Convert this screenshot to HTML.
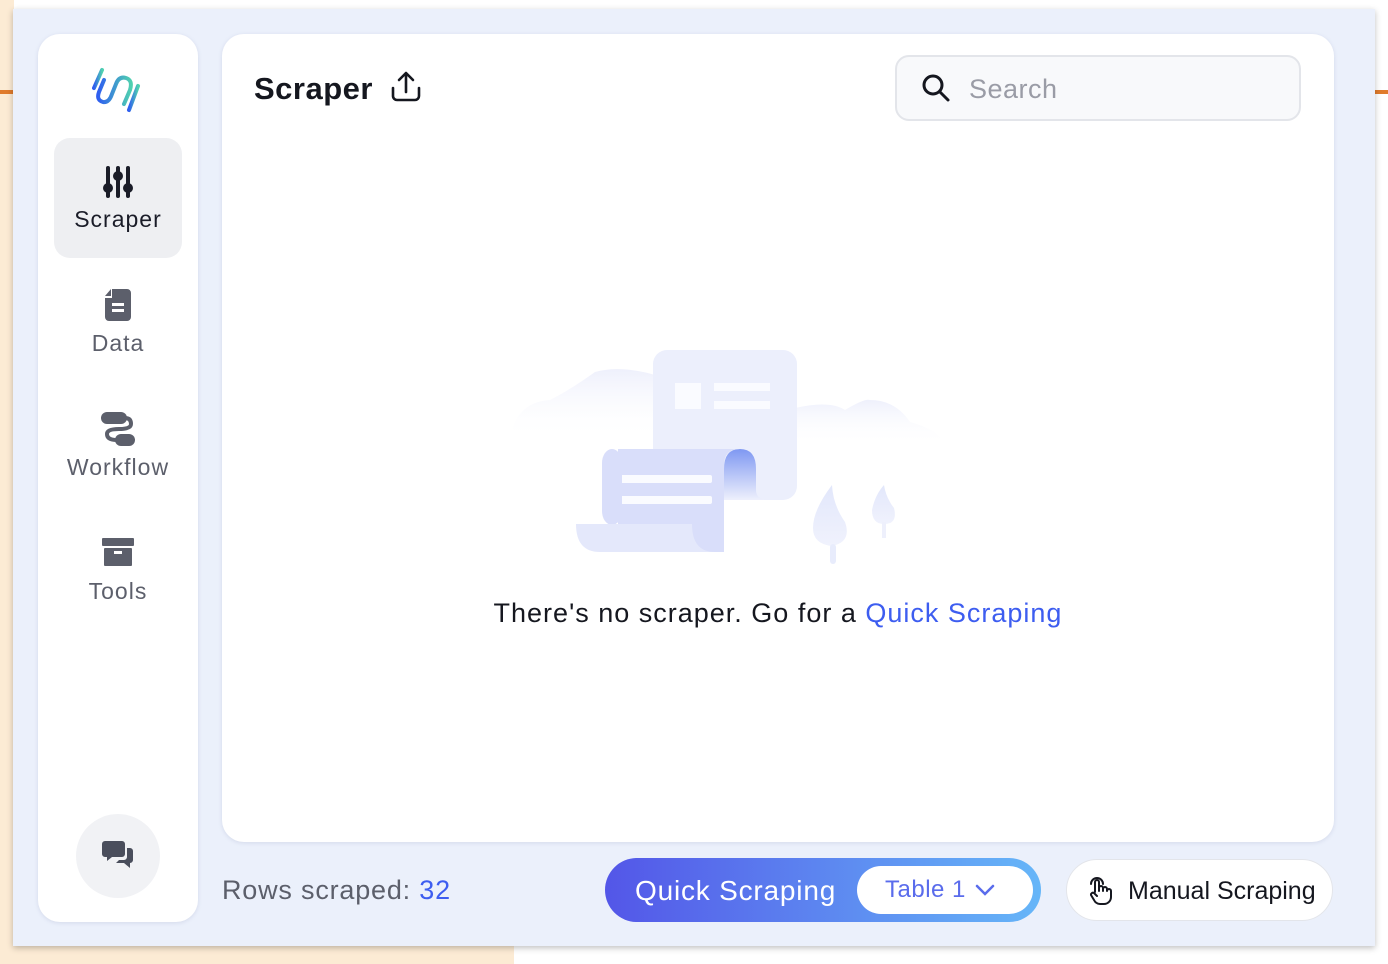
<!DOCTYPE html>
<html><head><meta charset="utf-8"><style>
*{box-sizing:border-box;margin:0;padding:0}
body{width:1388px;height:964px;position:relative;overflow:hidden;background:#fff;font-family:"Liberation Sans",sans-serif}
.bgl{position:absolute;left:0;top:0;width:14px;height:964px;background:#fcebd4}
.bgb{position:absolute;left:0;top:946px;width:514px;height:18px;background:#fcebd4}
.pop{position:absolute;left:13px;top:9px;width:1362px;height:937px;background:#ebf0fb;box-shadow:0 2px 6px rgba(0,0,0,.25)}
.side{position:absolute;left:38px;top:34px;width:160px;height:888px;background:#fff;border-radius:22px;box-shadow:0 1px 4px rgba(120,130,170,.2)}
.nav{position:absolute;left:16px;width:128px;height:120px;border-radius:16px;text-align:center;color:#5c5f6b;font-size:23px;letter-spacing:1px}
.nav svg{display:block;margin:0 auto}
.main{position:absolute;left:222px;top:34px;width:1112px;height:808px;background:#fff;border-radius:22px;box-shadow:0 1px 4px rgba(120,130,170,.2)}
</style></head><body>
<div class="bgl"></div><div style="position:absolute;left:0;top:90px;width:14px;height:4px;background:#e07b2c"></div>
<div style="position:absolute;right:0;top:90px;width:14px;height:4px;background:#e07b2c"></div>
<div class="bgb"></div>
<div class="pop"></div>
<div class="side">
  <svg style="position:absolute;left:54px;top:32px" width="52" height="48" viewBox="0 0 52 48">
    <defs><linearGradient id="lg" x1="0" x2="1"><stop offset="0" stop-color="#2f5ef0"/><stop offset="1" stop-color="#4fd0b0"/></linearGradient></defs>
    <g fill="none" stroke="url(#lg)" stroke-width="4" stroke-linecap="round">
      <path d="M10 4 L2 22"/><path d="M12 14 L7 26 Q4 34 11 36 Q17 37 20 28 L24 18 Q27 10 34 12 Q41 14 38 24 L32 38"/><path d="M46 20 L37 44"/>
    </g>
  </svg>
  <div class="nav" style="top:104px;background:#eeeff2;color:#1a1c28">
    <svg style="margin-top:26px" width="34" height="36" viewBox="0 0 34 36" fill="#1a1c28"><rect x="5" y="2" width="4" height="32" rx="2"/><rect x="15" y="2" width="4" height="32" rx="2"/><rect x="25" y="2" width="4" height="32" rx="2"/><circle cx="7" cy="24" r="5"/><circle cx="17" cy="12" r="5"/><circle cx="27" cy="24" r="5"/></svg>
    <div style="margin-top:6px">Scraper</div>
  </div>
  <div class="nav" style="top:236px">
    <svg style="margin-top:18px" width="30" height="34" viewBox="0 0 30 34"><path d="M9 1h15a4 4 0 0 1 4 4v24a4 4 0 0 1-4 4H6a4 4 0 0 1-4-4V10h7z" fill="#5c5f6b"/><path d="M2 8 L8 1 L8 8z" fill="#5c5f6b"/><rect x="9" y="15" width="12" height="3" fill="#fff"/><rect x="9" y="21" width="12" height="3" fill="#fff"/></svg>
    <div style="margin-top:8px">Data</div>
  </div>
  <div class="nav" style="top:360px">
    <svg style="margin-top:16px" width="38" height="38" viewBox="0 0 38 38" fill="#5c5f6b"><rect x="2" y="2" width="26" height="12" rx="6"/><rect x="16" y="24" width="20" height="12" rx="6"/><path d="M26 8 Q32 8 32 14 Q32 19 20 19 Q8 19 8 24 Q8 30 18 30" fill="none" stroke="#5c5f6b" stroke-width="4"/></svg>
    <div style="margin-top:6px">Workflow</div>
  </div>
  <div class="nav" style="top:484px">
    <svg style="margin-top:18px" width="34" height="32" viewBox="0 0 34 32" fill="#5c5f6b"><rect x="1" y="2" width="32" height="8" rx="1"/><rect x="3" y="12" width="28" height="18" rx="1"/><rect x="13" y="15" width="8" height="3" fill="#fff"/></svg>
    <div style="margin-top:10px">Tools</div>
  </div>
  <div style="position:absolute;left:38px;top:780px;width:84px;height:84px;border-radius:50%;background:#f1f2f5">
    <svg style="position:absolute;left:26px;top:26px" width="32" height="30" viewBox="0 0 32 30" fill="#4a4e5c"><path d="M3 1h17a3 3 0 0 1 3 3v10a3 3 0 0 1-3 3H10l-5 4v-4H3a3 3 0 0 1-3-3V4a3 3 0 0 1 3-3z"/><path d="M25 8h3a3 3 0 0 1 3 3v9a3 3 0 0 1-3 3v5l-6-5h-8l3-3h5a3 3 0 0 0 3-3z"/></svg>
  </div>
</div>
<div class="main">
  <div style="position:absolute;left:32px;top:37px;font-size:31px;font-weight:bold;color:#15171f;letter-spacing:0.5px">Scraper</div>
  <svg style="position:absolute;left:167px;top:37px" width="34" height="32" viewBox="0 0 34 32" fill="none" stroke="#15171f" stroke-width="2.6" stroke-linecap="round" stroke-linejoin="round"><path d="M17 21V3M10 9l7-7 7 7"/><path d="M4 17v8a4 4 0 0 0 4 4h18a4 4 0 0 0 4-4v-8"/></svg>
  <div style="position:absolute;left:673px;top:21px;width:406px;height:66px;border:2px solid #e3e5ea;border-radius:14px;background:#f8f9fb">
    <svg style="position:absolute;left:24px;top:16px" width="30" height="30" viewBox="0 0 30 30" fill="none" stroke="#15171f" stroke-width="3" stroke-linecap="round"><circle cx="12" cy="12" r="9"/><path d="M19 19l8 8"/></svg>
    <div style="position:absolute;left:72px;top:17px;font-size:27px;color:#9a9ca6;letter-spacing:0.5px">Search</div>
  </div>
  <svg style="position:absolute;left:278px;top:296px" width="460" height="250" viewBox="0 0 460 250">
    <defs>
      <linearGradient id="hill" x1="0" y1="0" x2="0" y2="1"><stop offset="0" stop-color="#eef0fc"/><stop offset="1" stop-color="#fff" stop-opacity="0"/></linearGradient>
      <linearGradient id="curl" x1="0" y1="0" x2="0" y2="1"><stop offset="0" stop-color="#7f98f2"/><stop offset="1" stop-color="#eef0fc"/></linearGradient>
      <linearGradient id="tree" x1="0" y1="0" x2="0" y2="1"><stop offset="0" stop-color="#e2e7fb"/><stop offset="1" stop-color="#f0f2fd"/></linearGradient>
    </defs>
    <path d="M12 100 Q20 72 50 70 Q70 60 95 42 Q120 35 155 45 L155 110 L12 110z" fill="url(#hill)"/>
    <path d="M295 78 Q330 70 345 80 Q365 68 370 70 Q395 70 410 92 Q440 100 445 115 L295 115z" fill="url(#hill)"/>
    <rect x="153" y="20" width="144" height="150" rx="14" fill="#eceffc"/>
    <rect x="175" y="53" width="26" height="26" fill="#fafbff"/><rect x="214" y="53" width="56" height="8" fill="#fafbff"/><rect x="214" y="71" width="56" height="8" fill="#fafbff"/>
    <path d="M224 139 Q224 119 240 119 Q256 119 256 139 L256 160 Q256 170 270 170 L224 170z" fill="url(#curl)"/>
    <path d="M118 119 L240 119 Q224 119 224 135 L224 222 L118 222z" fill="#d9defa"/>
    <rect x="118" y="145" width="94" height="8" rx="2" fill="#fafbff"/><rect x="118" y="166" width="94" height="8" rx="2" fill="#fafbff"/>
    <rect x="102" y="119" width="20" height="76" rx="14" fill="#d9defa"/>
    <path d="M76 194 L192 194 Q192 222 215 222 L100 222 Q76 222 76 194z" fill="#e4e8fb"/>
    <path d="M332 155 Q333 175 345 192 Q352 212 332 216 Q313 214 313 198 Q313 180 332 155z" fill="url(#tree)"/>
    <rect x="330" y="214" width="6" height="20" rx="3" fill="#e8ecfc"/>
    <path d="M384 155 Q386 168 394 178 Q398 194 384 194 Q372 194 372 180 Q375 165 384 155z" fill="url(#tree)"/>
    <rect x="382" y="192" width="4" height="16" fill="#eef0fc"/>
  </svg>
  <div style="position:absolute;left:0;width:1112px;top:564px;text-align:center;font-size:27px;color:#15171f;letter-spacing:1px">There's no scraper. Go for a <span style="color:#3d5df0">Quick Scraping</span></div>
</div>
<div style="position:absolute;left:222px;top:875px;font-size:27px;color:#5c5f6b;letter-spacing:0.8px">Rows scraped: <span style="color:#3d5df0">32</span></div>
<div style="position:absolute;left:605px;top:858px;width:436px;height:64px;border-radius:32px;background:linear-gradient(90deg,#5356e8,#66b6f8)">
  <div style="position:absolute;left:30px;top:17px;font-size:28px;color:#fff;letter-spacing:0.8px">Quick Scraping</div>
  <div style="position:absolute;left:252px;top:8px;width:176px;height:48px;border-radius:24px;background:#fff">
    <div style="position:absolute;left:28px;top:10px;font-size:24px;color:#5a6cec;letter-spacing:0.5px">Table 1</div>
    <svg style="position:absolute;left:118px;top:18px" width="20" height="12" viewBox="0 0 20 12" fill="none" stroke="#5a6cec" stroke-width="2.5" stroke-linecap="round"><path d="M2 2l8 8 8-8"/></svg>
  </div>
</div>
<div style="position:absolute;left:1066px;top:859px;width:267px;height:62px;border-radius:31px;background:#fff;border:1px solid #e3e5ea">
  <svg style="position:absolute;left:20px;top:16px" width="26" height="30" viewBox="0 0 26 30" fill="none" stroke="#15171f" stroke-width="2" stroke-linecap="round" stroke-linejoin="round"><path d="M8 16V6a2 2 0 0 1 4 0v9M12 12a2 2 0 0 1 4 0v3M16 13a2 2 0 0 1 4 0v2M20 15a2 2 0 0 1 4 0v6a7 7 0 0 1-7 7h-4a7 7 0 0 1-6-4l-3-5a2 2 0 0 1 3-2l3 3"/><path d="M4 8a6 6 0 0 1 12 0"/></svg>
  <div style="position:absolute;left:61px;top:17px;font-size:25px;color:#15171f">Manual Scraping</div>
</div>
</body></html>
